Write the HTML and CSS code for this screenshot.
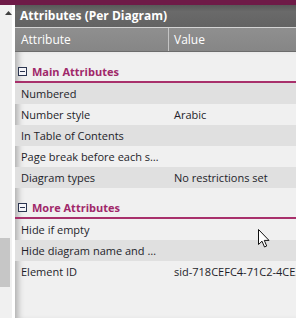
FILE: index.html
```html
<!DOCTYPE html>
<html>
<head>
<meta charset="utf-8">
<link rel="stylesheet" href="styles.css">
</head>
<body>
<div class="topbar"></div>
<div class="main">
  <div class="scrollbar">
    <svg class="arrow" width="7" height="4" viewBox="0 0 7 4"><path d="M0 4 L3.5 0 L7 4 Z" fill="#404040"/></svg>
    <div class="thumb"></div>
  </div>
  <div class="gap"></div>
  <div class="panel">
    <div class="title">Attributes (Per Diagram)</div>
    <div class="colhead">
      <div class="c1">Attribute</div>
      <div class="c2">Value</div>
    </div>
    <div class="body">
      <div class="group">
        <span class="minus"></span><span class="gname">Main Attributes</span>
      </div>
      <div class="row alt"><div class="c1">Numbered</div><div class="c2"></div></div>
      <div class="row"><div class="c1">Number style</div><div class="c2">Arabic</div></div>
      <div class="row alt"><div class="c1">In Table of Contents</div><div class="c2"></div></div>
      <div class="row"><div class="c1">Page break before each sub-diagram</div><div class="c2"></div></div>
      <div class="row alt"><div class="c1">Diagram types</div><div class="c2">No restrictions set</div></div>
      <div class="group">
        <span class="minus"></span><span class="gname">More Attributes</span>
      </div>
      <div class="row"><div class="c1">Hide if empty</div><div class="c2"></div></div>
      <div class="row alt"><div class="c1">Hide diagram name and sub-diagrams</div><div class="c2"></div></div>
      <div class="row"><div class="c1">Element ID</div><div class="c2">sid-718CEFC4-71C2-4CE3-A1B2</div></div>
    </div>
  </div>
</div>
<svg class="cursor" width="13" height="20" viewBox="0 0 13 20"><path d="M0.5 0.5 L0.5 15.5 L4 12.2 L6.5 18 L8.7 17 L6.3 11.4 L11 11.4 Z" fill="#fff" stroke="#111" stroke-width="1" stroke-linejoin="round"/></svg>
</body>
</html>
```
FILE: styles.css
```css
html, body {
  margin: 0;
  padding: 0;
}
body {
  width: 296px;
  height: 318px;
  overflow: hidden;
  background: #f0f0f0;
  font-family: "Open Sans", "DejaVu Sans", sans-serif;
  font-size: 11px;
  color: #1e1e2a;
  position: relative;
}
.topbar {
  height: 5px;
  background: #6e1a47;
}
.main {
  display: flex;
  height: 313px;
}
.scrollbar {
  width: 12px;
  flex: none;
  background: #f0f0f0;
  display: flex;
  flex-direction: column;
  align-items: flex-end;
}
.arrow {
  display: block;
  margin-top: 6px;
}
.thumb {
  width: 10px;
  align-self: flex-start;
  height: 49px;
  margin-top: 223px;
  background: #c6c6c6;
}
.gap {
  width: 3px;
  flex: none;
  background: #ffffff;
}
.panel {
  width: 320px;
  flex: none;
  display: flex;
  flex-direction: column;
}
.title {
  height: 22px;
  line-height: 22px;
  padding-left: 5px;
  color: #ffffff;
  font-weight: bold;
  font-size: 12px;
  background: linear-gradient(#585858, #6a6a6a 30%, #636363);
  border-bottom: 1px solid #d4d4d4;
}
.colhead {
  display: flex;
  height: 23px;
  line-height: 23px;
  color: #ffffff;
  font-size: 12px;
  background: linear-gradient(#8f8f8f, #868686);
  border-bottom: 1px solid #6c6c6c;
}
.c1 {
  width: 153px;
  flex: none;
  box-sizing: border-box;
  padding: 0 9px 0 6px;
  white-space: nowrap;
  overflow: hidden;
  text-overflow: ellipsis;
}
.c2 {
  flex: 1;
  padding-left: 6px;
  white-space: nowrap;
  overflow: hidden;
}
.colhead .c2 {
  border-left: 1px solid #c4c4c4;
  padding-left: 5px;
}
.body {
  flex: 1;
  box-shadow: inset 7px 0 6px -4px rgba(0, 0, 0, 0.28);
}
.group {
  height: 19px;
  padding-top: 10px;
  display: flex;
  align-items: center;
  border-bottom: 2px solid #a8306b;
}
.minus {
  width: 7px;
  height: 7px;
  border: 1px solid #2b3550;
  margin-left: 3px;
  margin-right: 5px;
  position: relative;
  background: #f4f4f8;
}
.minus::after {
  content: "";
  position: absolute;
  left: 1px;
  right: 1px;
  top: 3px;
  height: 1px;
  background: #2b3550;
}
.gname {
  color: #a0286a;
  font-weight: bold;
  font-size: 11px;
}
.row {
  display: flex;
  height: 21px;
  line-height: 21px;
}
.row.alt {
  background: #e0e0e0;
}
.cursor {
  position: absolute;
  left: 258px;
  top: 229px;
}
```
